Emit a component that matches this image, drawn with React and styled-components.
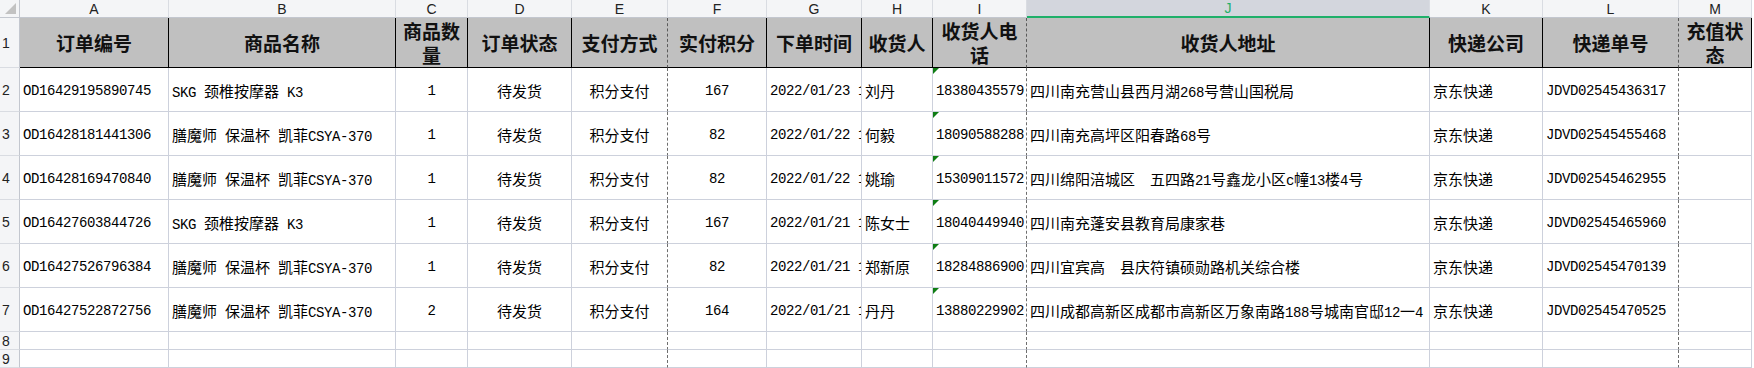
import React from "react";
import styled, { createGlobalStyle, css } from "styled-components";

const GlobalStyle = createGlobalStyle`
  html, body { margin: 0; padding: 0; background: #fff; overflow: hidden; }
  body { font-family: "Liberation Sans", "Noto Sans CJK SC", sans-serif; }
`;

const COLS = [
  { key: "A", w: 149, align: "left" },
  { key: "B", w: 227, align: "left" },
  { key: "C", w: 72, align: "center" },
  { key: "D", w: 104, align: "center" },
  { key: "E", w: 96, align: "center", dashed: true },
  { key: "F", w: 99, align: "center" },
  { key: "G", w: 95, align: "left" },
  { key: "H", w: 71, align: "left" },
  { key: "I", w: 94, align: "left", dashed: true, flag: true },
  { key: "J", w: 403, align: "left", selected: true },
  { key: "K", w: 113, align: "left" },
  { key: "L", w: 136, align: "left", dashed: true },
  { key: "M", w: 73, align: "left" },
];

const TITLES = ["订单编号", "商品名称", "商品数量", "订单状态", "支付方式", "实付积分", "下单时间", "收货人", "收货人电话", "收货人地址", "快递公司", "快递单号", "充值状态"];

const ROWS = [
  ["OD16429195890745", "SKG 颈椎按摩器 K3", "1", "待发货", "积分支付", "167", "2022/01/23 14:32", "刘丹", "18380435579", "四川南充营山县西月湖268号营山国税局", "京东快递", "JDVD02545436317", ""],
  ["OD16428181441306", "膳魔师 保温杯 凯菲CSYA-370", "1", "待发货", "积分支付", "82", "2022/01/22 10:15", "何毅", "18090588288", "四川南充高坪区阳春路68号", "京东快递", "JDVD02545455468", ""],
  ["OD16428169470840", "膳魔师 保温杯 凯菲CSYA-370", "1", "待发货", "积分支付", "82", "2022/01/22 10:08", "姚瑜", "15309011572", "四川绵阳涪城区　五四路21号鑫龙小区c幢13楼4号", "京东快递", "JDVD02545462955", ""],
  ["OD16427603844726", "SKG 颈椎按摩器 K3", "1", "待发货", "积分支付", "167", "2022/01/21 18:26", "陈女士", "18040449940", "四川南充蓬安县教育局康家巷", "京东快递", "JDVD02545465960", ""],
  ["OD16427526796384", "膳魔师 保温杯 凯菲CSYA-370", "1", "待发货", "积分支付", "82", "2022/01/21 16:11", "郑新原", "18284886900", "四川宜宾高　县庆符镇硕勋路机关综合楼", "京东快递", "JDVD02545470139", ""],
  ["OD16427522872756", "膳魔师 保温杯 凯菲CSYA-370", "2", "待发货", "积分支付", "164", "2022/01/21 16:04", "丹丹", "13880229902", "四川成都高新区成都市高新区万象南路188号城南官邸12一4", "京东快递", "JDVD02545470525", ""],
];

const GRID = "#cdd1dc";
const HEAD_BG = "#f4f5f7";
const HAN = /([\u3000-\u303f\u4e00-\u9fff\uff00-\uffef]+)/;

const Sheet = styled.div`
  display: grid;
  grid-template-columns: 20px ${COLS.map((c) => c.w + "px").join(" ")};
  grid-template-rows: 18px 50px repeat(6, 44px) 18px 18px;
  width: 1752px;
`;

const Corner = styled.div`
  box-sizing: border-box;
  background: ${HEAD_BG};
  border-right: 1px solid #c3c7cf;
  border-bottom: 1px solid #c3c7cf;
  display: flex;
  align-items: flex-end;
  justify-content: flex-end;
  padding: 0 3px 3px 0;
`;

const CornerMark = styled.div`
  width: 0;
  height: 0;
  border-left: 11px solid transparent;
  border-bottom: 11px solid #c2c2c2;
`;

const ColHead = styled.div`
  box-sizing: border-box;
  background: ${(p) => (p.$selected ? "#d3d6dd" : HEAD_BG)};
  border-right: 1px solid #d9dce2;
  border-bottom: ${(p) => (p.$selected ? "2px solid #1fb06a" : "1px solid #c3c7cf")};
  color: ${(p) => (p.$selected ? "#1fb06a" : "#222")};
  font-family: "Liberation Sans", sans-serif;
  font-size: 14px;
  display: flex;
  align-items: center;
  justify-content: center;
`;

const RowHead = styled.div`
  box-sizing: border-box;
  background: ${HEAD_BG};
  border-right: 1px solid #c3c7cf;
  border-bottom: 1px solid #d9dce2;
  color: #222;
  font-family: "Liberation Sans", sans-serif;
  font-size: 14px;
  display: flex;
  align-items: center;
  padding-left: 2px;
`;

const Title = styled.div`
  box-sizing: border-box;
  background: #c0c0c0;
  border-right: 1px ${(p) => (p.$dashed ? "dashed #5a5a5a" : "solid #000")};
  border-bottom: 1px solid #000;
  font-family: "Noto Sans CJK SC", sans-serif;
  font-weight: 700;
  font-size: 19px;
  line-height: 24px;
  color: #111;
  display: flex;
  align-items: center;
  justify-content: center;
  text-align: center;
  overflow: hidden;
  word-break: break-all;
`;

const Cell = styled.div`
  position: relative;
  box-sizing: border-box;
  min-width: 0;
  background: #fff;
  border-right: 1px ${(p) => (p.$dashed ? "dashed #6e6e6e" : `solid ${GRID}`)};
  border-bottom: 1px solid ${GRID};
  display: flex;
  align-items: center;
  justify-content: ${(p) => (p.$align === "center" ? "center" : "flex-start")};
  padding: 2px 3px 0;
  overflow: hidden;
  color: #000;
  ${(p) =>
    p.$flag &&
    css`
      &::before {
        content: "";
        position: absolute;
        top: 0;
        left: 0;
        border-top: 6px solid #0f7d14;
        border-right: 6px solid transparent;
      }
    `}
`;

const Value = styled.span`
  white-space: pre;
  font-family: "Liberation Mono", monospace;
  font-size: 14px;
  letter-spacing: -0.4px;
`;

const Han = styled.span`
  font-family: "Noto Sans CJK SC", sans-serif;
  font-size: 15px;
  letter-spacing: 0;
`;

const Txt = ({ value }) => (
  <Value>
    {value.split(HAN).map((part, i) =>
      HAN.test(part) ? <Han key={i}>{part}</Han> : part
    )}
  </Value>
);

export default function App() {
  return (
    <>
      <GlobalStyle />
      <Sheet>
        <Corner>
          <CornerMark />
        </Corner>
        {COLS.map((c) => (
          <ColHead key={c.key} $selected={c.selected}>{c.key}</ColHead>
        ))}

        <RowHead>1</RowHead>
        {COLS.map((c, i) => (
          <Title key={c.key} $dashed={c.dashed}>{TITLES[i]}</Title>
        ))}

        {ROWS.map((row, r) => (
          <React.Fragment key={r}>
            <RowHead>{r + 2}</RowHead>
            {COLS.map((c, i) => (
              <Cell key={c.key} $align={c.align} $dashed={c.dashed} $flag={c.flag}>
                {row[i] && <Txt value={row[i]} />}
              </Cell>
            ))}
          </React.Fragment>
        ))}

        {[8, 9].map((n) => (
          <React.Fragment key={n}>
            <RowHead>{n}</RowHead>
            {COLS.map((c) => (
              <Cell key={c.key} $dashed={c.dashed} />
            ))}
          </React.Fragment>
        ))}
      </Sheet>
    </>
  );
}
